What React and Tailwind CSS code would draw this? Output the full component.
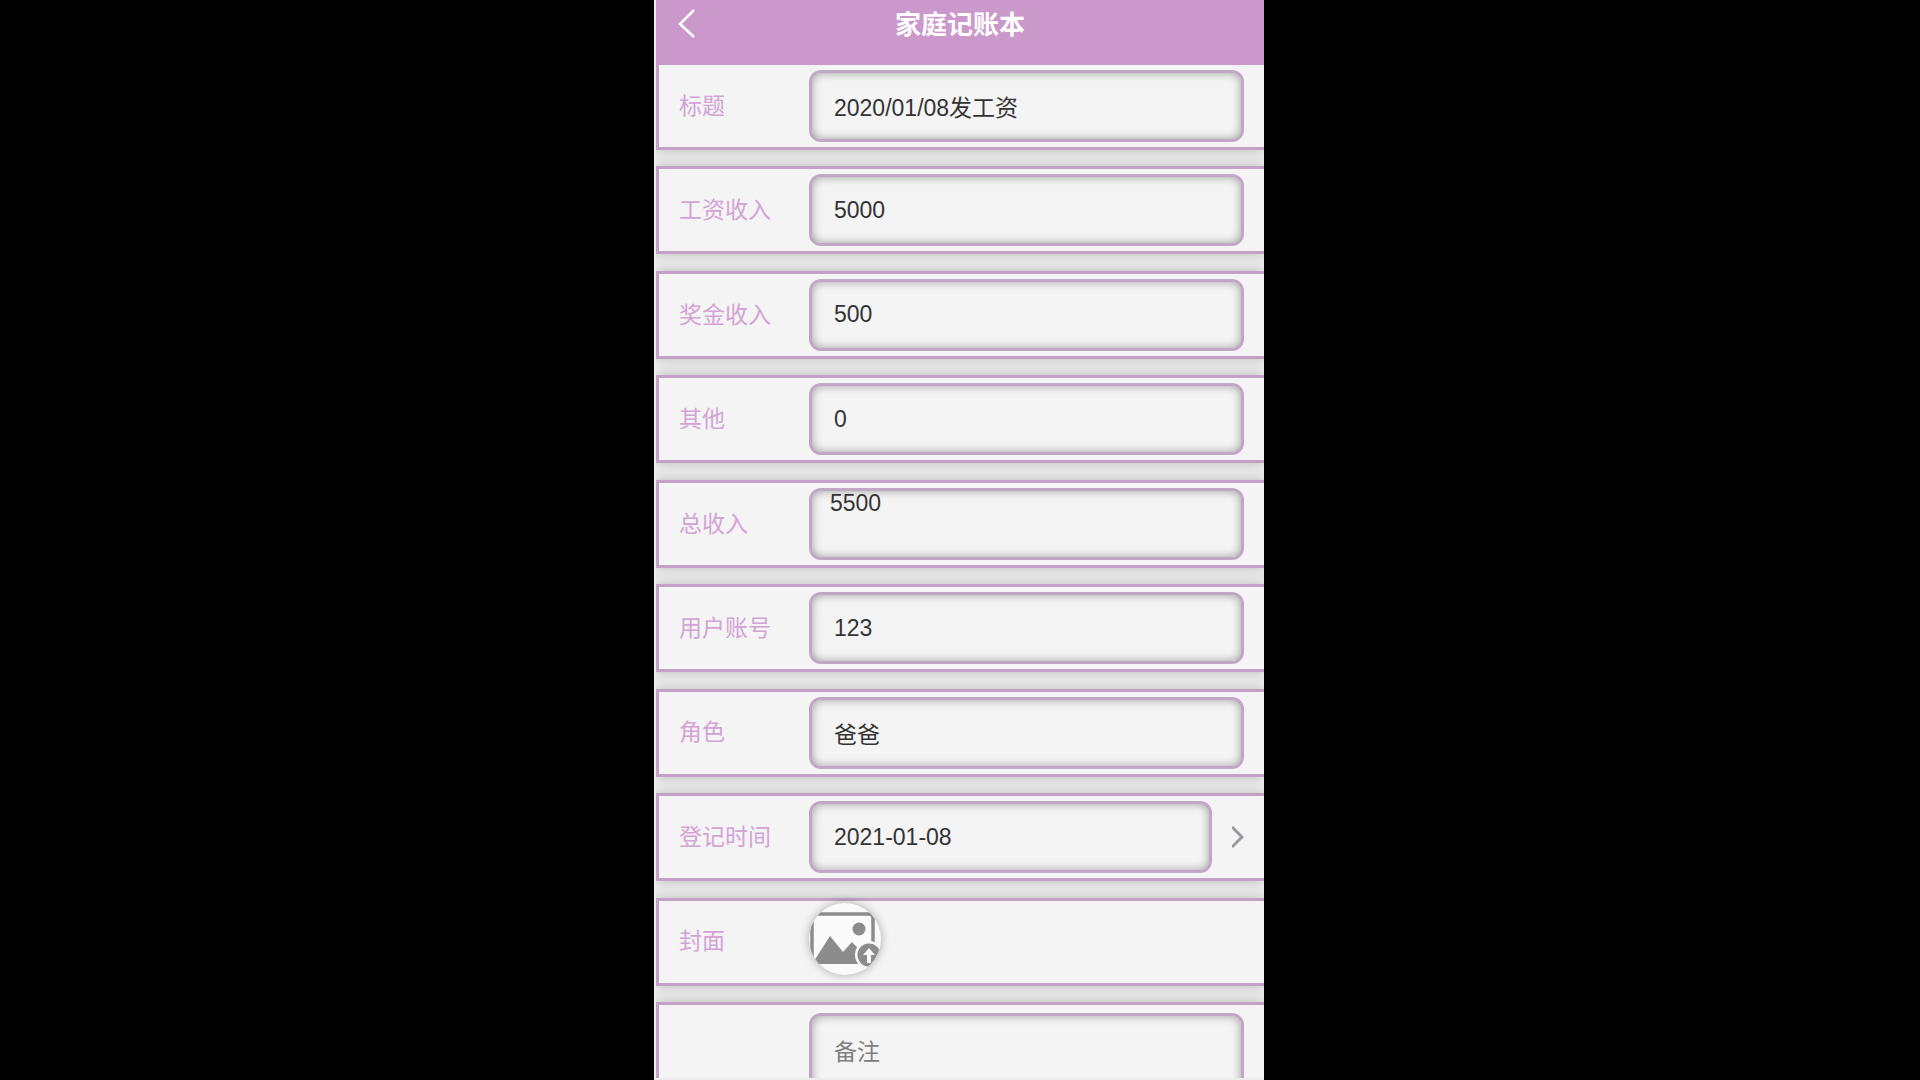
import { useState } from "react";

const fieldClass =
  "min-w-0 flex-1 h-[72px] rounded-xl border-3 border-[#c0a7c3] bg-[#f4f4f4] shadow-[inset_0_0_10px_rgba(0,0,0,0.35)] text-[23px] text-[#333] outline-none";

const rowClass =
  "flex shrink-0 items-center border-3 border-r-0 border-[#c5a0c8] bg-[#f5f4f5] pl-5 pr-5 shadow-[0_0_12px_rgba(0,0,0,0.22)]";

const fields = [
  { id: "title", label: "标题", value: "2020/01/08发工资" },
  { id: "salary", label: "工资收入", value: "5000" },
  { id: "bonus", label: "奖金收入", value: "500" },
  { id: "other", label: "其他", value: "0" },
  { id: "total", label: "总收入" },
  { id: "account", label: "用户账号", value: "123" },
  { id: "role", label: "角色", value: "爸爸" },
  { id: "date", label: "登记时间", value: "2021-01-08" },
];

const Label = ({ id, children }) => (
  <label htmlFor={id} className="w-[130px] shrink-0 text-[23px] text-[#d3a3d6]">
    {children}
  </label>
);

const UploadIcon = () => (
  <svg className="h-full w-full" viewBox="0 0 72 72" fill="none">
    <path d="M3 61V15q0-4 4-4h53q4 0 4 4v24" stroke="#8c8c8c" strokeWidth="3.5" />
    <path d="M3 61 21 33 34 49 43 39 58 55V61z" fill="#8c8c8c" />
    <circle cx="50" cy="26" r="6.5" fill="#8c8c8c" />
    <circle cx="60" cy="52" r="14" fill="#fafafa" />
    <circle cx="60" cy="52" r="11.5" fill="#8c8c8c" />
    <path d="M60 45 54 52h4v8h4v-8h4z" fill="#fafafa" />
  </svg>
);

const App = () => {
  const [values, setValues] = useState(
    Object.fromEntries(fields.map((f) => [f.id, f.value]))
  );
  const [remark, setRemark] = useState("");

  const total =
    Number(values.salary) + Number(values.bonus) + Number(values.other);

  return (
    <div className="min-h-screen bg-black pr-0.5 font-['Liberation_Sans','Noto_Sans_CJK_SC',sans-serif]">
      <div className="mx-auto flex h-screen w-full max-w-[610px] flex-col overflow-hidden bg-[#eeedee] pb-0.5 pl-0.5">
        {/* Header */}
        <header className="relative z-10 flex h-[65px] shrink-0 items-center justify-center bg-[#cb98cc] pb-3.5">
          <button aria-label="返回" className="absolute left-5 top-2 h-8 w-6">
            <svg className="h-full w-full" viewBox="0 0 24 32" fill="none">
              <path d="M18 2 4 16 18 29" stroke="#fff" strokeWidth="2.5" />
            </svg>
          </button>
          <h1 className="text-[26px] font-bold text-white">家庭记账本</h1>
        </header>

        {/* Form */}
        <form className="flex min-h-0 flex-1 flex-col justify-between overflow-hidden">
          {fields.map((field) => (
            <div
              key={field.id}
              className={`${rowClass} h-[88px] first:h-[85px] first:border-t-0`}
            >
              <Label id={field.id}>{field.label}</Label>
              {field.id === "total" ? (
                <output id="total" className={`${fieldClass} px-[18px] leading-6`}>
                  {total}
                </output>
              ) : (
                <input
                  id={field.id}
                  type="text"
                  className={`${fieldClass} px-[22px]`}
                  value={values[field.id]}
                  onChange={(e) =>
                    setValues({ ...values, [field.id]: e.target.value })
                  }
                />
              )}
              {field.id === "date" && (
                <svg className="ml-5 h-6 w-3" viewBox="0 0 12 24" fill="none">
                  <path d="M0 2 10 12 0 22" stroke="#969a9d" strokeWidth="3" />
                </svg>
              )}
            </div>
          ))}

          <div className={`${rowClass} h-[88px]`}>
            <Label id="cover">封面</Label>
            <button
              id="cover"
              type="button"
              className="mt-0.5 h-[72px] w-[72px] self-start overflow-hidden rounded-full bg-[#fafafa] shadow-[0_0_10px_rgba(0,0,0,0.3)]"
            >
              <UploadIcon />
            </button>
          </div>

          {/* Remark runs past the bottom of the screen */}
          <div className={`${rowClass} h-[76px] items-start overflow-hidden border-b-0 pt-2`}>
            <div className="w-[130px] shrink-0"></div>
            <textarea
              aria-label="备注"
              placeholder="备注"
              className={`${fieldClass} h-[160px] shrink-0 resize-none px-[22px] pt-5 leading-8 placeholder:text-[#808080]`}
              value={remark}
              onChange={(e) => setRemark(e.target.value)}
            />
          </div>
        </form>
      </div>
    </div>
  );
};

export default App;
